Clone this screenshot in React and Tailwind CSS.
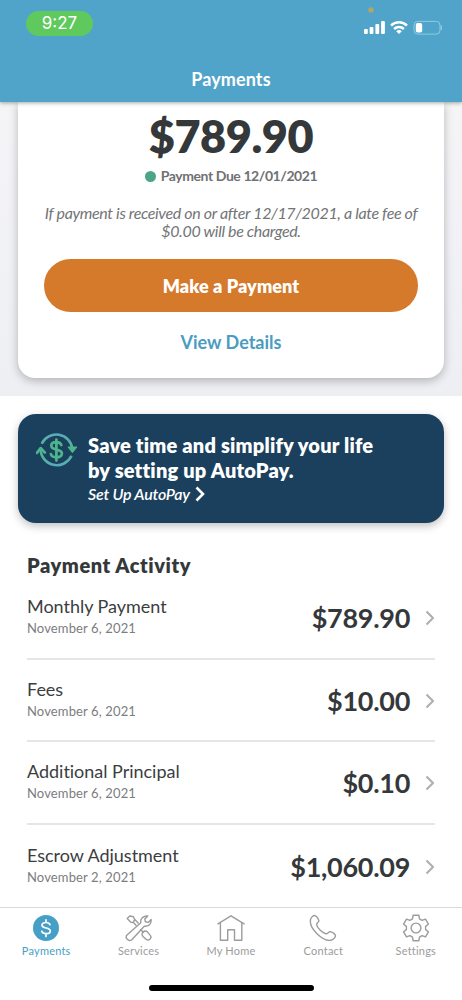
const ACTIVITY = [
  { title: 'Monthly Payment', date: 'November 6, 2021', amount: '$789.90' },
  { title: 'Fees', date: 'November 6, 2021', amount: '$10.00' },
  { title: 'Additional Principal', date: 'November 6, 2021', amount: '$0.10' },
  { title: 'Escrow Adjustment', date: 'November 2, 2021', amount: '$1,060.09' },
];

const TABS = [
  { label: 'Payments', icon: PaymentsIcon, active: true },
  { label: 'Services', icon: ServicesIcon },
  { label: 'My Home', icon: HomeIcon },
  { label: 'Contact', icon: PhoneIcon },
  { label: 'Settings', icon: GearIcon },
];

function PaymentsIcon() {
  return (
    <svg width="28" height="28" viewBox="0 0 28 28" fill="none">
      <circle cx="14" cy="14" r="13" fill="#459fc6" />
      <path d="M18 10.6C17.5 9.2 16 8.5 14 8.5c-2.300 0-4 1-4 2.700 0 3.900 8.300 1.700 8.300 5.700 0 1.700-1.800 2.700-4.200 2.700-2.200 0-3.900-.8-4.400-2.400M14 5.800v2.700M14 19.600v2.800" stroke="#fff" strokeWidth="1.700" strokeLinecap="round" />
    </svg>
  );
}

function ServicesIcon() {
  return (
    <svg width="28" height="28" viewBox="0 0 28 28" fill="none" stroke="currentColor" strokeWidth="1.400" strokeLinecap="round" strokeLinejoin="round">
      {/* wrench */}
      <path d="M2 21 15.800 8.800C15 5 18.200 1.400 22.800 2l-3 3 .6 2.800 2.800.6 2.900-3c.6 4.400-2.800 7.500-6.800 6.800L6.800 25.800c-3.200 2.300-7.200-1.900-4.800-4.800z" />
      {/* screwdriver */}
      <path d="M11 11.200 8.400 8.500M13.200 8.900 9.600 5.300M8.400 8.500 5.800 8.200 2.200 4.600 4.800 2l3.600.8 1.200 2.500zM15.600 15.800l3 2.600M18.300 17.700c1.400-1.200 2.900-.8 4.200.4l2.600 3c1.200 1.300 1 2.800-.1 4s-2.700 1.200-4 .1l-3-2.800c-1.300-1.300-1.200-3.400.3-4.700z" />
    </svg>
  );
}

function HomeIcon() {
  return (
    <svg width="28" height="28" viewBox="0 0 28 28" fill="none" stroke="currentColor" strokeWidth="1.400" strokeLinecap="round" strokeLinejoin="round">
      <path d="M.9 9.800 14 1.800l13.100 8M3.400 8.800v17.500h7.300V15.800h6.800v10.500h7.300V8.800" />
    </svg>
  );
}

function PhoneIcon() {
  return (
    <svg width="28" height="28" viewBox="0 0 28 28" fill="none" stroke="currentColor" strokeWidth="1.400" strokeLinecap="round" strokeLinejoin="round">
      <path d="M1.600 5.300C2.200 3.200 4.400 1.300 6 1.600c1.600.6 3.300 3.200 3.900 5 .2 1.300-2.100 2.300-2.300 3.700.4 3.500 5.500 8.600 9.300 9.500 1.600.2 2.700-2 4.200-2.200 1.700.2 4.200 1.800 5.200 3.500.7 1.500-1.500 4.100-3.700 4.900C14.500 28.400-.6 14.300 1.600 5.300z" />
    </svg>
  );
}

function GearIcon() {
  return (
    <svg width="28" height="28" viewBox="0 0 28 28" fill="none" stroke="currentColor" strokeWidth="1.400" strokeLinejoin="round">
      <path d="M11.100 1.300h5.800l.6 3.600 2.600 1.500 3.400-1.300 2.900 5.100-2.800 2.200v3.200l2.800 2.200-2.900 5.100-3.400-1.300-2.600 1.500-.6 3.600h-5.800l-.6-3.600-2.600-1.500-3.400 1.300-2.900-5.100 2.800-2.200v-3.200l-2.800-2.200 2.900-5.100 3.400 1.300 2.600-1.500z" />
      <circle cx="14" cy="14" r="4.900" />
    </svg>
  );
}

function AutoPayIcon() {
  return (
    <svg width="42" height="38" viewBox="0 0 42 38" fill="none">
      <defs>
        <linearGradient id="ring" x1="0" y1="0" x2="0" y2="38" gradientUnits="userSpaceOnUse">
          <stop offset="0" stopColor="#5cabc2" />
          <stop offset=".5" stopColor="#4db58b" />
          <stop offset="1" stopColor="#5cabc2" />
        </linearGradient>
      </defs>
      <g stroke="url(#ring)" strokeWidth="2.600">
        <path d="M5.700 12.700A16.200 16.200 0 0 1 36.400 18" />
        <path d="M35.500 24.800A16.200 16.200 0 0 1 4.600 18" />
        <path d="M.9 22 4.600 17l4.300 4.600" strokeLinecap="round" strokeLinejoin="round" />
      </g>
      <path d="M32 16h9l-4.600 5.700z" fill="#4db58b" stroke="#4db58b" strokeLinejoin="round" />
      <path d="M25.300 14.200c-.5-1.900-2.400-3-5-3-2.900 0-5 1.400-5 3.600 0 5.200 10.600 2.500 10.600 7.700 0 2.300-2.300 3.800-5.500 3.800-2.900 0-5-1.200-5.500-3.300M20.400 8.600v21" stroke="#4db58b" strokeWidth="2.700" strokeLinecap="round" />
    </svg>
  );
}

function StatusIcons() {
  return (
    <svg width="80" height="30" viewBox="0 0 80 30" fill="none">
      <circle cx="9" cy="5" r="2.700" fill="#b3a468" />
      <g fill="#fff">
        <rect x="2" y="24" width="3.800" height="5" rx="1" />
        <rect x="7.600" y="22" width="3.800" height="7" rx="1" />
        <rect x="13.400" y="19" width="3.800" height="10" rx="1" />
        <rect x="19.100" y="16" width="3.800" height="13" rx="1" />
        <path d="m37 29-2.800-2.800a4.200 4.200 0 0 1 5.600 0z" />
      </g>
      <g stroke="#fff" strokeWidth="2.500">
        <path d="M29 20.500a11.600 11.600 0 0 1 16 0" />
        <path d="M32.100 24a7.200 7.200 0 0 1 9.800 0" />
      </g>
      <rect x="52" y="16.400" width="26" height="12.700" rx="3.700" stroke="#8ecbe2" />
      <rect x="53.800" y="18" width="6.400" height="9.500" rx="1.800" fill="#fff" />
      <path d="M79.300 20.500v4.400" stroke="#8ecbe2" strokeWidth="1.300" />
    </svg>
  );
}

function ActivityRow({ title, date, amount }) {
  return (
    <li className="flex h-[82.7px] items-center border-b-2 border-[#e6e6e6] last:h-[81.9px] last:border-b-0">
      <div className="-mt-px flex-1">
        <p className="text-[18px] leading-[23px] tracking-[-0.02px] text-[#3b3d3f]">{title}</p>
        <p className="text-[13px] leading-[21px] tracking-[0.13px] text-[#7b7d7f]">{date}</p>
      </div>
      <span className="pt-px text-[27px] font-bold leading-8 tracking-[-0.3px] text-[#35383a]">{amount}</span>
      <svg className="ml-[15px] mt-px" width="10" height="16" viewBox="0 0 10 16" fill="none" stroke="#b0b0b0" strokeWidth="2.200">
        <path d="m1.500 1.500 6.500 6.500-6.500 6.500" strokeLinejoin="round" />
      </svg>
    </li>
  );
}

export default function App() {
  return (
    <div className="flex h-[1000px] w-[462px] flex-col overflow-hidden bg-white font-['Lato',sans-serif]">
      <header className="z-10 flex h-[102px] shrink-0 flex-col bg-[#51a4c9] shadow-[0_1px_4px_rgba(0,0,0,0.35)]">
        <div className="flex h-[66px] items-start justify-between pl-[26px] pr-5 pt-[11px]">
          <span className="flex h-[25px] w-[67px] items-center justify-center rounded-full bg-[#60c95e] pt-px font-['Inter',sans-serif] text-[17px] text-white">
            9:27
          </span>
          <div className="-mt-[6px]">
            <StatusIcons />
          </div>
        </div>
        <h1 className="text-center text-[18px] font-bold leading-[26px] tracking-[0.1px] text-white">Payments</h1>
      </header>

      <section className="h-[294px] shrink-0 bg-gradient-to-b from-[#f5f5f8] to-[#eeeff3] px-[18px]">
        <div className="flex h-[276px] flex-col items-center rounded-b-[17px] bg-white px-[26px] shadow-[0_3px_10px_rgba(0,0,0,0.25)]">
          <p className="mt-[8px] text-[45px] font-extrabold leading-[52px] tracking-[-0.4px] text-[#35383a]">$789.90</p>
          <p className="mt-[4px] flex items-center gap-[5px] text-[14px] font-bold leading-5 tracking-[-0.42px] text-[#6f7173]">
            <span className="size-[11px] rounded-full bg-[#4ca585]" />
            Payment Due 12/01/2021
          </p>
          <p className="mt-[18px] whitespace-nowrap text-center text-[16px] italic leading-[18px] tracking-[-0.35px] text-[#727476]">
            If payment is received on or after 12/17/2021, a late fee of
            <br />
            $0.00 will be charged.
          </p>
          <button className="mt-[19px] h-[53px] w-full shrink-0 rounded-full bg-[#d5792b] pt-[2px] text-[18px] font-extrabold tracking-[0.1px] text-white">
            Make a Payment
          </button>
          <a className="mt-[18px] text-[18px] font-bold leading-6 text-[#4a9cc0]">View Details</a>
        </div>
      </section>

      <main className="flex flex-1 flex-col">
        <div className="mx-[18px] mt-[18px] flex h-[109px] shrink-0 gap-[10px] rounded-[18px] bg-[#1b405d] pl-[18px] pt-[17px] shadow-[0_3px_9px_rgba(0,0,0,0.25)]">
          <AutoPayIcon />
          <div className="text-white">
            <p className="mt-[2px] text-[20px] font-extrabold leading-[25px] tracking-[0.2px]">
              Save time and simplify your life
              <br />
              by setting up AutoPay.
            </p>
            <a className="flex items-center gap-[5px] text-[16px] font-semibold italic leading-[22px] tracking-[-0.2px]">
              Set Up AutoPay
              <svg width="10" height="16" viewBox="0 0 10 16" fill="none" stroke="#fff" strokeWidth="2.600">
                <path d="m1.500 1.500 6.500 6.500-6.500 6.500" />
              </svg>
            </a>
          </div>
        </div>

        <div className="px-[27px] pt-[30px]">
          <h2 className="text-[20px] font-extrabold leading-[24px] tracking-[0.55px] text-[#35383a]">Payment Activity</h2>
          <ul>
            {ACTIVITY.map((item) => (
              <ActivityRow key={item.title} {...item} />
            ))}
          </ul>
        </div>
      </main>

      <nav className="flex h-[93px] shrink-0 flex-col border-t border-[#dadada] bg-white">
        <div className="grid grid-cols-5 pt-[6px]">
          {TABS.map(({ label, icon: Icon, active }) => (
            <a key={label} className={`flex flex-col items-center ${active ? 'text-[#459fc6]' : 'text-[#9c9c9c]'}`}>
              <Icon />
              <span className="text-[11px] leading-[18px] tracking-[0.2px]">{label}</span>
            </a>
          ))}
        </div>
        <div className="mx-auto mt-[25px] h-[6px] w-[165px] rounded-full bg-black" />
      </nav>
    </div>
  );
}
